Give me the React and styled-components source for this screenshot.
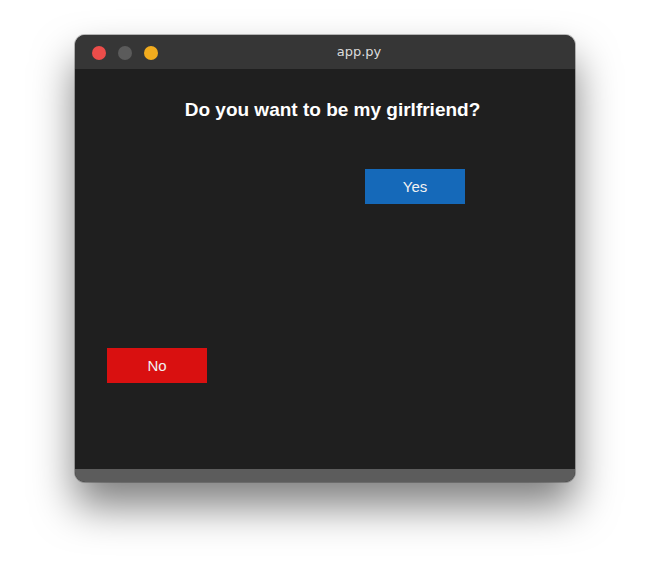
import React from "react";
import styled, { createGlobalStyle } from "styled-components";

const Global = createGlobalStyle`
  html, body { margin: 0; padding: 0; background: #ffffff; }
  body { width: 650px; height: 567px; overflow: hidden; }
`;

const Stage = styled.div`
  width: 650px;
  height: 567px;
  padding: 35px 0 0 75px;
  box-sizing: border-box;
`;

const Window = styled.div`
  width: 500px;
  border-radius: 10px;
  overflow: hidden;
  background: #1f1f1f;
  box-shadow: 0 24px 42px rgba(0, 0, 0, 0.5), 0 0 0 1px rgba(0, 0, 0, 0.25);
  display: flex;
  flex-direction: column;
`;

const TitleBar = styled.div`
  height: 34px;
  background: #363636;
  display: flex;
  align-items: center;
  padding-left: 17px;
  box-sizing: border-box;
`;

const Lights = styled.div`
  display: flex;
  gap: 12px;
`;

const Light = styled.span`
  width: 14px;
  height: 14px;
  border-radius: 50%;
  background: ${(p) => p.$color};
  margin-top: 2px;
`;

const Title = styled.div`
  flex: 1;
  text-align: center;
  font-family: "DejaVu Sans", sans-serif;
  font-size: 13px;
  color: #dcdcdc;
  padding-right: 15px;
  padding-bottom: 1px;
`;

const Content = styled.div`
  height: 400px;
  display: flex;
  flex-direction: column;
  align-items: flex-start;
`;

const Heading = styled.h1`
  margin: 29px 0 0 0;
  align-self: stretch;
  text-align: center;
  padding-left: 15px;
  font-family: "Liberation Sans", Arial, sans-serif;
  font-weight: bold;
  font-size: 19px;
  line-height: 24px;
  color: #ffffff;
`;

const Button = styled.button`
  width: 100px;
  height: 35px;
  border: none;
  border-radius: 0;
  padding: 0;
  background: ${(p) => p.$bg};
  color: #f2f2f2;
  font-family: "Liberation Sans", Arial, sans-serif;
  font-size: 15px;
  margin-left: ${(p) => p.$left}px;
  margin-top: ${(p) => p.$top}px;
  cursor: pointer;
`;

const BottomBar = styled.div`
  height: 13px;
  background: #5c5c5c;
`;

export default function App() {
  return (
    <>
      <Global />
      <Stage>
        <Window>
          <TitleBar>
            <Lights>
              <Light $color="#ec4d4a" />
              <Light $color="#5b5b5b" />
              <Light $color="#f2ac1e" />
            </Lights>
            <Title>app.py</Title>
          </TitleBar>
          <Content>
            <Heading>Do you want to be my girlfriend?</Heading>
            <Button $bg="#1569b9" $left={290} $top={47}>Yes</Button>
            <Button $bg="#d91010" $left={32} $top={144}>No</Button>
          </Content>
          <BottomBar />
        </Window>
      </Stage>
    </>
  );
}
